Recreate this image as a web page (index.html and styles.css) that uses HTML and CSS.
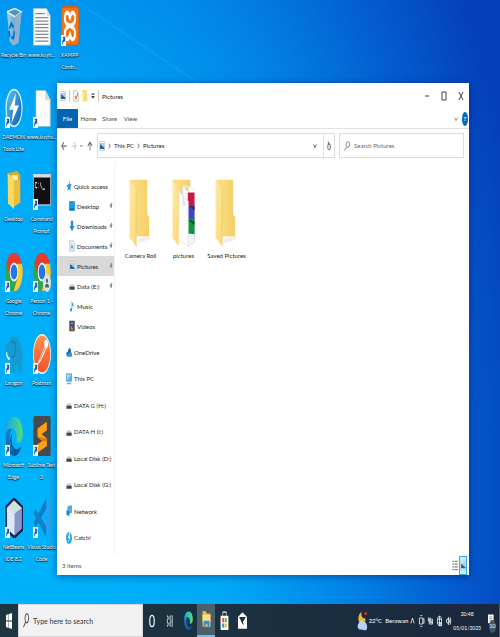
FILE: index.html
```html
<!DOCTYPE html>
<html lang="en">
<head>
<meta charset="utf-8">
<title>Pictures</title>
<link rel="stylesheet" href="styles.css">
</head>
<body>
<svg class="sprite" aria-hidden="true">
  <defs>
    <linearGradient id="gBin" x1="0" x2="1"><stop offset="0" stop-color="#a9cfe8"/><stop offset=".55" stop-color="#6ba9d0"/><stop offset="1" stop-color="#8fb6cf"/></linearGradient>
    <linearGradient id="gOrange" x1="0" x2="0" y1="0" y2="1"><stop offset="0" stop-color="#ff9350"/><stop offset="1" stop-color="#f3502a"/></linearGradient>
    <linearGradient id="gFolder" x1="0" x2="1"><stop offset="0" stop-color="#fbe08a"/><stop offset="1" stop-color="#f4cf66"/></linearGradient>
    <linearGradient id="gFlap" x1="0" x2="1" y1="0" y2="1"><stop offset="0" stop-color="#ffeaa6"/><stop offset="1" stop-color="#fbd977"/></linearGradient>
    <linearGradient id="gEdge1" x1="0" x2="1"><stop offset="0" stop-color="#1fa5e0"/><stop offset=".6" stop-color="#33c7b5"/><stop offset="1" stop-color="#63dc55"/></linearGradient>
    <linearGradient id="gEdge2" x1="0" x2="1" y1="0" y2="1"><stop offset="0" stop-color="#1b86d6"/><stop offset="1" stop-color="#0c4a94"/></linearGradient>
    <linearGradient id="gDaemon" x1="0" x2="1" y1="0" y2="1"><stop offset="0" stop-color="#5ac3f5"/><stop offset="1" stop-color="#0a5fb8"/></linearGradient>
    <linearGradient id="gCube" x1="0" x2="0" y1="0" y2="1"><stop offset="0" stop-color="#f4f9fc"/><stop offset="1" stop-color="#8fa6d8"/></linearGradient>
  </defs>
  <symbol id="shortcut" viewBox="0 0 12 12" preserveAspectRatio="none"><path d="M0 0h12v12H0z" fill="#f4f7fa"/><path d="M4 2h6v6L8 6.500Q4.500 7.500 4 11Q1 7 6 4z" fill="#1c56a8"/></symbol>
  <symbol id="bin" viewBox="0 0 48 48" preserveAspectRatio="none"><path d="M5 7 26 3l18 4-8 37-14 4-9-5z" fill="url(#gBin)"/><path d="M5 7 26 3l18 4-17 6z" fill="#4f93be" stroke="#dcecf5" stroke-width="2"/><path d="m27 13-4 34 13-3 8-37z" fill="#8cb3cc"/><path d="m12 27 5-6 6 5m2 4-2 8h-6m-4-1-2-7" fill="none" stroke="#0870c8" stroke-width="4"/></symbol>
  <symbol id="textfile" viewBox="0 0 48 48" preserveAspectRatio="none"><path d="M1 3h35l10 9v35H1z" fill="#fafafa" stroke="#b5bcc0"/><path d="M6 9h26M6 14h35M6 18h35M6 22h35M6 26h35M6 30h35M6 34h35M6 38h35M6 42h35" stroke="#848a8e" stroke-width="1.500"/><path d="M36 3v9h10" fill="#dce2e5"/></symbol>
  <symbol id="blankfile" viewBox="0 0 48 48" preserveAspectRatio="none"><path d="M8 3h25l13 11v32H8z" fill="#fbfbfb" stroke="#c0c6ca"/><path d="M33 3v11h13z" fill="#cfd5d8"/></symbol>
  <symbol id="xampp" viewBox="0 0 48 48" preserveAspectRatio="none"><rect x="1" y="1" width="46" height="46" rx="6" fill="#f17416" stroke="#d95f0a" stroke-width="2"/><path d="M17 8c-9 0-9 13 0 14l7 2 7-2c9-1 9-14 0-14-4 0-5 3-7 6-2-3-3-6-7-6zm0 32c-9 0-9-13 0-14l7-3 7 3c9 1 9 14 0 14-4 0-5-3-7-6-2 3-3 6-7 6z" fill="none" stroke="#fff" stroke-width="5"/></symbol>
  <symbol id="daemon" viewBox="0 0 48 48" preserveAspectRatio="none"><ellipse cx="24" cy="24" rx="23" ry="23" fill="#e4f3fb"/><ellipse cx="24" cy="24" rx="20" ry="21" fill="url(#gDaemon)"/><path d="M29 6 11 26h11l-5 17 20-22H26z" fill="#fff"/></symbol>
  <symbol id="folderopen" viewBox="0 0 48 48" preserveAspectRatio="none"><path d="M7 4 33 1l8 5v33l-22 6z" fill="#d9a92e"/><path d="M18 6h16v34l-14 5z" fill="#fff0aa"/><path d="M23 12h17v27l-17 5z" fill="#edbd3d"/><path d="m7 4 17 7v36L8 40z" fill="#f8d865"/></symbol>
  <symbol id="cmd" viewBox="0 0 48 48" preserveAspectRatio="none"><path d="M1 6h46v36H1z" fill="#111" stroke="#b6bcc0" stroke-width="2"/><path d="M1 5h46v4H1z" fill="#d8dcde"/><path d="M11 15H7v6h4m4-5v1m0 3v1m4-6 4 7m2 1h7" fill="none" stroke="#eee" stroke-width="1.500"/></symbol>
  <symbol id="chrome" viewBox="0 0 48 48" preserveAspectRatio="none"><circle cx="24" cy="24" r="23" fill="#31a652"/><path d="M4 12.500a23 23 0 0 1 40 0L45 14H24L14 30z" fill="#e33b2e"/><path d="M45 14A23 23 0 0 1 23 47l11-17-3-16z" fill="#fcc934"/><circle cx="24" cy="24" r="11.500" fill="#fff"/><circle cx="24" cy="24" r="9" fill="#2475e8"/></symbol>
  <symbol id="person" viewBox="0 0 24 24" preserveAspectRatio="none"><circle cx="12" cy="12" r="12" fill="#dfe3e7"/><circle cx="12" cy="9" r="3" fill="#56606a"/><path d="M6 18q0-5 6-5t6 5z" fill="#56606a"/></symbol>
  <symbol id="laragon" viewBox="0 0 48 48" preserveAspectRatio="none"><path d="M12 8Q22-2 34 6q13 8 13 24l-2 16H34l-2-10-4 1v9H17V35Q4 34 5 18q-5 3-4 10-4-8 2-16z" fill="#159bd1"/><path d="M17 10q13-3 12 9-3 11-12 8" fill="none" stroke="#0b7fb4" stroke-width="2"/><path d="M4 22q2 8 9 8" fill="none" stroke="#e7f6fb" stroke-width="3"/></symbol>
  <symbol id="postman" viewBox="0 0 48 48" preserveAspectRatio="none"><circle cx="24" cy="24" r="23" fill="url(#gOrange)" stroke="#f6ece5" stroke-width="2"/><path d="m11 38 6-8 15-16 4 3-15 15z" fill="#fff"/><circle cx="35" cy="12" r="5" fill="#fff"/><path d="m18 31 15-15" stroke="#f26b3a" stroke-width="1.500"/></symbol>
  <symbol id="edge" viewBox="0 0 48 48" preserveAspectRatio="none"><path d="M1 24C1 9 12 1 25 1c14 0 22 9 22 20 0 10-11 14-17 9 5-7-2-15-12-15C9 15 4 19 1 24z" fill="url(#gEdge1)"/><path d="M1 24c3-8 11-11 18-8-9 4-9 20 2 25 8 4 17 1 22-4-4 8-11 11-18 11C12 48 1 38 1 24z" fill="url(#gEdge2)"/><path d="M19 22c-4 8 1 17 11 18 6 0 11-2 14-4-8 12-27 8-30-4-1-5 1-9 5-10z" fill="#0a559c"/></symbol>
  <symbol id="sublime" viewBox="0 0 48 48" preserveAspectRatio="none"><rect x="1" y="0" width="46" height="48" rx="3" fill="#484a4b"/><path d="m12 15 25-8v10l-14 5 14 5v9l-25 8V34l13-4-13-5z" fill="#ff9f15"/><path d="m12 25 25 2v4l-12-1z" fill="#df7b08"/></symbol>
  <symbol id="netbeans" viewBox="0 0 48 48" preserveAspectRatio="none"><path d="M24 1 46 11v27L25 47 3 38V11z" fill="url(#gCube)" stroke="#182450" stroke-width="4"/><path d="m5 12 20 7 20-7L24 3z" fill="#cfe3df"/><path d="M25 19v26l19-8V12z" fill="#8796c6"/><path d="M6 13v24l19 8V19z" fill="#dde7f5"/></symbol>
  <symbol id="vscode" viewBox="0 0 48 48" preserveAspectRatio="none"><path d="m35 1 12 6v34l-12 6z" fill="#2ba2ed"/><path d="M35 1v12L7 35l-6-5z" fill="#087bc6"/><path d="M35 47V34L7 13l-6 5z" fill="#1281c9"/></symbol>
  <symbol id="folder" viewBox="0 0 48 96" preserveAspectRatio="none"><path d="m20 84 26-3-3 4-24 6z" fill="#eee"/><path d="M1 1h37v49l4 4v27H16z" fill="url(#gFolder)"/><path d="m1 1 14 15v79L1 83z" fill="url(#gFlap)"/><path d="M15 16v79" stroke="#e8c463"/></symbol>
  <symbol id="folderfull" viewBox="0 0 48 96" preserveAspectRatio="none"><path d="M1 1h37v79H16z" fill="url(#gFolder)"/><path d="m22 9 25 7v73l-12 6-14-9z" fill="#f3f5f6" stroke="#ccd1d3"/><path d="m25 8 10 8v14l13 3V15z" fill="#fff" stroke="#ddd"/><path d="m26 12 8 6v-6z" fill="#f8ce31"/><path d="M33 19h14v20l-14-2z" fill="#c91746"/><path d="M33 37h14v20l-14-1z" fill="#4146bf"/><path d="m33 37 14 7v-5z" fill="#312a72"/><path d="M33 56h14v22l-14-1z" fill="#139344"/><path d="m33 57 14 8v-5z" fill="#075424"/><path d="m14 15 12 13 8 3v64L14 86z" fill="#fcfcfc" stroke="#d6dadd"/><path d="m20 18 2 19 7 1-3-10z" fill="#e5e7e8"/><path d="m1 1 13 15v79L1 83z" fill="url(#gFlap)"/></symbol>
  <symbol id="smallfolder" viewBox="0 0 16 16" preserveAspectRatio="none"><path d="M1 0h12v9l2 1v5H1z" fill="#f9dc7b"/><path d="m1 0 4 3v13l-4-1z" fill="#ffe999"/></symbol>
  <symbol id="picture" viewBox="0 0 16 16" preserveAspectRatio="none"><path d="M1 2h14v12H1z" fill="#eef3f6" stroke="#a9b4bb"/><path d="M3 4h11v8H3z" fill="#9cd3f5"/><path d="m3 6 4 1 3 2 4 1v2H3z" fill="#245e8f"/></symbol>
  <symbol id="check" viewBox="0 0 16 16" preserveAspectRatio="none"><path d="M2 1h9l3 3v11H2z" fill="#fff" stroke="#999"/><path d="m5 8 3 4 5-8" fill="none" stroke="#e45c2d" stroke-width="2"/></symbol>
  <symbol id="star" viewBox="0 0 16 16" preserveAspectRatio="none"><path d="m9 1 1 4 5 1-3 3 1 6-4-3-5 3 1-5-4-3 6-1z" fill="#2497df"/></symbol>
  <symbol id="desktop" viewBox="0 0 16 16" preserveAspectRatio="none"><path d="M1 2h14v12H1z" fill="#1c9cec" stroke="#0878c8"/><path d="M2 11h12v2H2z" fill="#0b6ec0"/></symbol>
  <symbol id="download" viewBox="0 0 16 16" preserveAspectRatio="none"><path d="M5 1h6v7h4l-7 7-7-7h4z" fill="#2889db"/></symbol>
  <symbol id="document" viewBox="0 0 16 16" preserveAspectRatio="none"><path d="M2 1h9l3 3v11H2z" fill="#f4f9fc" stroke="#94a6b2"/><path d="M4 5h6M4 12h8" stroke="#7db2d0"/><path d="M5 7h6v4H5z" fill="#62afe0"/></symbol>
  <symbol id="drive" viewBox="0 0 16 16" preserveAspectRatio="none"><path d="m3 6 10 0 2 4H1z" fill="#c5c9cb"/><path d="M1 9h14v4H1z" fill="#3b4245"/><path d="M3 11h3" stroke="#5acc60"/></symbol>
  <symbol id="music" viewBox="0 0 16 16" preserveAspectRatio="none"><path d="M7 0c0 4 6 3 5 9l-2 3c1-4-1-5-2-5v6c-1 4-6 3-5 0 0-2 2-3 4-2z" fill="#1c9de8"/></symbol>
  <symbol id="video" viewBox="0 0 16 16" preserveAspectRatio="none"><path d="M1 1h14v14H1z" fill="#31363d"/><path d="M4 2h8v5H4z" fill="#507cb5"/><path d="M4 8h8v6H4z" fill="#b8814e"/><path d="m4 5 8 5v3z" fill="#233b71"/></symbol>
  <symbol id="cloud" viewBox="0 0 16 16" preserveAspectRatio="none"><path d="M1 11q0-4 4-3 1-6 6-5 3 1 2 5 4 2 2 6H3z" fill="#1265bb"/><path d="M4 13q0-4 4-4 4-1 5 2 3 0 2 3H5z" fill="#279de8"/></symbol>
  <symbol id="pc" viewBox="0 0 16 16" preserveAspectRatio="none"><path d="M1 1h14v10H1z" fill="#53b8ee" stroke="#4081ad"/><path d="M2 2h12L2 10z" fill="#9edaf8"/><path d="M2 14h12" stroke="#8ba2af" stroke-width="2"/></symbol>
  <symbol id="network" viewBox="0 0 16 16" preserveAspectRatio="none"><path d="m5 2 10-1v9l-10 2z" fill="#4eb6e8" stroke="#347eaa"/><path d="m1 7 8 1v7l-8-2z" fill="#238bc9"/></symbol>
  <symbol id="catch" viewBox="0 0 16 16" preserveAspectRatio="none"><circle cx="8" cy="8" r="8" fill="#1eaddd"/><path d="M9 0 5 8h3l-2 7 6-9H9l2-5z" fill="#fff"/></symbol>
  <symbol id="pin" viewBox="0 0 8 16" preserveAspectRatio="none"><path d="m4 2 3 4-1 1v3l-1 1-2-2-2 5 1-6-1-2h2z" fill="#879198"/></symbol>
  <symbol id="lens" viewBox="0 0 12 20" preserveAspectRatio="none"><ellipse cx="7.500" cy="7" rx="3.500" ry="6" fill="none" stroke="currentColor" stroke-width="1.500"/><path d="m5 12-4 7" stroke="currentColor" stroke-width="1.500"/></symbol>
  <symbol id="back" viewBox="0 0 16 16" preserveAspectRatio="none"><path d="M15 8H2m6-6L2 8l6 6" fill="none" stroke="currentColor" stroke-width="2"/></symbol>
  <symbol id="forward" viewBox="0 0 16 16" preserveAspectRatio="none"><path d="M1 8h13M8 2l6 6-6 6" fill="none" stroke="currentColor" stroke-width="2"/></symbol>
  <symbol id="up" viewBox="0 0 16 16" preserveAspectRatio="none"><path d="M8 15V2M2 8l6-6 6 6" fill="none" stroke="currentColor" stroke-width="2"/></symbol>
  <symbol id="down" viewBox="0 0 16 16" preserveAspectRatio="none"><path d="m2 4 6 8 6-8" fill="none" stroke="currentColor" stroke-width="3"/></symbol>
  <symbol id="right" viewBox="0 0 16 16" preserveAspectRatio="none"><path d="m4 2 8 6-8 6" fill="none" stroke="currentColor" stroke-width="3"/></symbol>
  <symbol id="custom" viewBox="0 0 16 16" preserveAspectRatio="none"><path d="M2 3h12" stroke="#333" stroke-width="3"/><path d="M1 8h14l-7 7z" fill="#333"/></symbol>
</svg>

<main class="desktop">
  <svg class="beam" viewBox="0 0 100 100" preserveAspectRatio="none" aria-hidden="true"><path d="M0 0 100 100" stroke="#39b4ff" stroke-opacity=".35" stroke-width="1"/></svg>
  <nav class="shortcuts" aria-label="Desktop">
    <a href="#" class="app"><span class="art"><svg><use href="#bin"/></svg></span><span>Recycle Bin</span></a>
    <a href="#" class="app"><span class="art"><svg><use href="#daemon"/></svg><svg class="arrow"><use href="#shortcut"/></svg></span><span>DAEMON<br>Tools Lite</span></a>
    <a href="#" class="app"><span class="art"><svg><use href="#folderopen"/></svg></span><span>Desktop</span></a>
    <a href="#" class="app"><span class="art"><svg><use href="#chrome"/></svg><svg class="arrow"><use href="#shortcut"/></svg></span><span>Google<br>Chrome</span></a>
    <a href="#" class="app"><span class="art"><svg><use href="#laragon"/></svg><svg class="arrow"><use href="#shortcut"/></svg></span><span>Laragon</span></a>
    <a href="#" class="app"><span class="art"><svg><use href="#edge"/></svg><svg class="arrow"><use href="#shortcut"/></svg></span><span>Microsoft<br>Edge</span></a>
    <a href="#" class="app"><span class="art"><svg><use href="#netbeans"/></svg><svg class="arrow"><use href="#shortcut"/></svg></span><span>NetBeans<br>IDE 8.2</span></a>
    <a href="#" class="app"><span class="art"><svg><use href="#textfile"/></svg></span><span>www.kuyh...</span></a>
    <a href="#" class="app"><span class="art"><svg><use href="#blankfile"/></svg><svg class="arrow"><use href="#shortcut"/></svg></span><span>www.kuyha...</span></a>
    <a href="#" class="app"><span class="art"><svg><use href="#cmd"/></svg><svg class="arrow"><use href="#shortcut"/></svg></span><span>Command<br>Prompt</span></a>
    <a href="#" class="app"><span class="art"><svg><use href="#chrome"/></svg><svg class="arrow"><use href="#shortcut"/></svg><svg class="profile"><use href="#person"/></svg></span><span>Person 1 -<br>Chrome</span></a>
    <a href="#" class="app"><span class="art"><svg><use href="#postman"/></svg><svg class="arrow"><use href="#shortcut"/></svg></span><span>Postman</span></a>
    <a href="#" class="app"><span class="art"><svg><use href="#sublime"/></svg><svg class="arrow"><use href="#shortcut"/></svg></span><span>Sublime Text<br>3</span></a>
    <a href="#" class="app"><span class="art"><svg><use href="#vscode"/></svg><svg class="arrow"><use href="#shortcut"/></svg></span><span>Visual Studio<br>Code</span></a>
    <a href="#" class="app"><span class="art"><svg><use href="#xampp"/></svg><svg class="arrow"><use href="#shortcut"/></svg></span><span>XAMPP<br>Contr...</span></a>
  </nav>

  <section class="window">
    <header class="titlebar">
      <svg class="mini"><use href="#picture"/></svg>
      <span class="rule"></span>
      <button class="quick" aria-label="Properties"><svg class="mini"><use href="#check"/></svg></button>
      <button class="quick" aria-label="New folder"><svg class="mini"><use href="#smallfolder"/></svg></button>
      <button class="quick" aria-label="Customize"><svg class="tiny"><use href="#custom"/></svg></button>
      <span class="rule"></span>
      <h1>Pictures</h1>
      <div class="controls">
        <button aria-label="Minimize"><svg viewBox="0 0 6 10" preserveAspectRatio="none"><path d="M1 5h4"/></svg></button>
        <button aria-label="Maximize"><svg viewBox="0 0 6 10" preserveAspectRatio="none"><path d="M1 1h4v8H1z"/></svg></button>
        <button aria-label="Close"><svg viewBox="0 0 6 10" preserveAspectRatio="none"><path d="m1 1 4 8m0-8L1 9"/></svg></button>
      </div>
    </header>
    <div class="tabs">
      <button class="file">File</button>
      <button>Home</button>
      <button>Share</button>
      <button>View</button>
      <div class="help">
        <button aria-label="Expand ribbon"><svg class="tiny"><use href="#down"/></svg></button>
        <button class="question">?</button>
      </div>
    </div>
    <div class="toolbar">
      <div class="history">
        <button aria-label="Back"><svg><use href="#back"/></svg></button>
        <button aria-label="Forward" class="off"><svg><use href="#forward"/></svg></button>
        <button aria-label="Recent"><svg class="dot"><use href="#down"/></svg></button>
        <button aria-label="Up"><svg><use href="#up"/></svg></button>
      </div>
      <div class="address">
        <svg class="mini"><use href="#picture"/></svg>
        <svg class="crumb"><use href="#right"/></svg>
        <a href="#">This PC</a>
        <svg class="crumb"><use href="#right"/></svg>
        <a href="#">Pictures</a>
        <button class="drop" aria-label="Previous locations"><svg class="tiny"><use href="#down"/></svg></button>
        <button class="reload" aria-label="Refresh"><svg viewBox="0 0 12 20" preserveAspectRatio="none"><path d="M3 7q-2 10 3 11t4-9Q9 4 4 5m0-4v6h4"/></svg></button>
      </div>
      <label class="find"><svg><use href="#lens"/></svg><input type="search" placeholder="Search Pictures" aria-label="Search Pictures"></label>
    </div>
    <div class="content">
      <nav class="tree" aria-label="Folders">
        <div class="favorites">
          <a href="#"><svg><use href="#star"/></svg>Quick access</a>
          <a href="#" class="sub"><svg><use href="#desktop"/></svg>Desktop<svg class="pin"><use href="#pin"/></svg></a>
          <a href="#" class="sub"><svg><use href="#download"/></svg>Downloads<svg class="pin"><use href="#pin"/></svg></a>
          <a href="#" class="sub"><svg><use href="#document"/></svg>Documents<svg class="pin"><use href="#pin"/></svg></a>
          <a href="#" class="sub current"><svg><use href="#picture"/></svg>Pictures<svg class="pin"><use href="#pin"/></svg></a>
          <a href="#" class="sub"><svg><use href="#drive"/></svg>Data (E:)<svg class="pin"><use href="#pin"/></svg></a>
          <a href="#" class="sub"><svg><use href="#music"/></svg>Music</a>
          <a href="#" class="sub"><svg><use href="#video"/></svg>Videos</a>
        </div>
        <div class="places">
          <a href="#"><svg><use href="#cloud"/></svg>OneDrive</a>
          <a href="#"><svg><use href="#pc"/></svg>This PC</a>
          <a href="#"><svg><use href="#drive"/></svg>DATA G (H:)</a>
          <a href="#"><svg><use href="#drive"/></svg>DATA H (I:)</a>
          <a href="#"><svg><use href="#drive"/></svg>Local Disk (D:)</a>
          <a href="#"><svg><use href="#drive"/></svg>Local Disk (G:)</a>
          <a href="#"><svg><use href="#network"/></svg>Network</a>
          <a href="#"><svg><use href="#catch"/></svg>Catch!</a>
        </div>
      </nav>
      <div class="files">
        <a href="#"><svg><use href="#folder"/></svg>Camera Roll</a>
        <a href="#"><svg><use href="#folderfull"/></svg>pictures</a>
        <a href="#"><svg><use href="#folder"/></svg>Saved Pictures</a>
      </div>
    </div>
    <footer class="status">
      <span>3 items</span>
      <div class="views">
        <button aria-label="Details"><svg viewBox="0 0 16 16" preserveAspectRatio="none"><path d="M1 2h4M7 2h8M1 6h4M7 6h8M1 10h4M7 10h8M1 14h4M7 14h8" stroke="#777" stroke-width="1.500"/></svg></button>
        <button class="on" aria-label="Large icons"><svg><use href="#picture"/></svg></button>
      </div>
    </footer>
  </section>
</main>

<footer class="taskbar">
  <button class="start" aria-label="Start"><svg viewBox="0 0 16 16" preserveAspectRatio="none"><path d="m0 2 7-1v6.500H0zm8-1 8-1v7.500H8zM0 8.500h7V15l-7-1zm8 0h8V16l-8-1z" fill="#fff"/></svg></button>
  <label class="search"><svg><use href="#lens"/></svg><input type="search" placeholder="Type here to search" aria-label="Type here to search"></label>
  <div class="pinned">
    <button aria-label="Cortana"><svg class="slim" viewBox="0 0 16 32" preserveAspectRatio="none"><ellipse cx="8" cy="16" rx="6" ry="13" fill="none" stroke="#fff" stroke-width="3"/></svg></button>
    <button aria-label="Task view"><svg class="slim" viewBox="0 0 16 32" preserveAspectRatio="none"><path d="M1 3v4h9V3M1 29v-4h9v4M1 11h9v10H1zM14 3v6m0 3v17m-1-19h3" fill="none" stroke="#dce3e6" stroke-width="2"/></svg></button>
    <button aria-label="Edge"><svg><use href="#edge"/></svg></button>
    <button class="active" aria-label="Explorer"><svg viewBox="0 0 16 16" preserveAspectRatio="none"><path d="M1 1h6l1 2h7v11H1z" fill="#f5be43"/><path d="M1 4h14v6H1z" fill="#ffdf84"/><path d="M3 9h10v6h-3v-3H6v3H3z" fill="#2c91dc"/></svg></button>
    <button aria-label="Store"><svg viewBox="0 0 16 16" preserveAspectRatio="none"><path d="M5 4V1h6v3" fill="none" stroke="#fff"/><path d="M1 4h14v12H1z" fill="#fff"/><path d="M4 6h3.500v3.500H4z" fill="#e74a2c"/><path d="M8.500 6H12v3.500H8.500z" fill="#72b52b"/><path d="M4 10.500h3.500V14H4z" fill="#2298df"/><path d="M8.500 10.500H12V14H8.500z" fill="#f6b51c"/></svg></button>
    <button aria-label="Mail"><svg viewBox="0 0 16 16" preserveAspectRatio="none"><path d="m0 5 8-4 8 4v10H0z" fill="#fff"/><path d="M2 5h12l-5 4 1 3-3-2z" fill="#1d333f"/></svg></button>
  </div>
  <div class="tray">
    <button class="weather"><svg viewBox="0 0 16 24" preserveAspectRatio="none"><path d="M7 1q-7 5-4 12l9 1q3-3 1-5-7 0-6-8z" fill="#f5b52f"/><circle cx="14" cy="3" r="2" fill="#e52c2c"/><path d="M3 22Q-1 18 3 14q3-5 7-1 5 0 6 5t-3 5z" fill="#b8d3f2"/></svg>22°C&nbsp; Berawan</button>
    <div class="signals">
      <button aria-label="Hidden icons"><svg viewBox="0 0 12 20" preserveAspectRatio="none"><path d="m2 14 4-9 4 9"/></svg></button>
      <button aria-label="Meet now"><svg viewBox="0 0 12 20" preserveAspectRatio="none"><path d="M1 5h8v10H1zM9 8l3-2v8l-3-2M3 1h5M3 19h5"/></svg></button>
      <button aria-label="Battery"><svg viewBox="0 0 12 20" preserveAspectRatio="none"><path d="M3 7h8v8H3zM1 4v6h4V4M6 10h3v3H6z"/></svg></button>
      <button aria-label="Network"><svg viewBox="0 0 12 20" preserveAspectRatio="none"><ellipse cx="6" cy="10" rx="5" ry="8"/><path d="M1 7h10M1 13h10M6 2v16M7 14h4v4H7z"/></svg></button>
      <button aria-label="Volume"><svg viewBox="0 0 12 20" preserveAspectRatio="none"><path d="M1 8h2l3-4v12l-3-4H1zM8 7q2 3 0 6m2-9q3 6 0 12"/></svg></button>
    </div>
    <button class="clock">20:48<br>05/01/2023</button>
    <button class="notice" aria-label="Notifications"><svg viewBox="0 0 16 24" preserveAspectRatio="none"><path d="M0 1h15v15H9l-4 5v-5H0z" fill="#fff"/><path d="M3 5h9M3 8h9M3 11h9" stroke="#26374a"/></svg><span>10</span></button>
  </div>
</footer>
</body>
</html>
```
FILE: styles.css
```css
* { box-sizing: border-box; }

body {
  margin: 0;
  height: 100vh;
  display: flex;
  flex-direction: column;
  overflow: hidden;
  font-family: Lato, Roboto, "Liberation Sans", sans-serif;
  font-size: 6px;
  color: #222;
}

a { color: inherit; text-decoration: none; }

button {
  display: flex;
  align-items: center;
  justify-content: center;
  padding: 0;
  border: 0;
  background: none;
  color: inherit;
  font: inherit;
}

input {
  min-width: 0;
  flex: 1;
  padding: 0;
  border: 0;
  outline: 0;
  background: none;
  font: inherit;
  color: inherit;
}

input::placeholder { color: inherit; opacity: 1; }

svg { flex: none; overflow: visible; }

.sprite { position: absolute; width: 0; height: 0; }

.desktop {
  position: relative;
  flex: 1;
  min-height: 0;
  background: radial-gradient(ellipse 106% 165% at 6% 82%, #00b4fb 0, #00a9f8 38%, #0285e8 60%, #0459ce 82%, #0440ba 96%);
}

.beam { position: absolute; left: 15%; top: 0; width: 25%; height: 14%; }

.shortcuts {
  position: relative;
  height: 100%;
  display: grid;
  grid-auto-flow: column;
  grid-template-rows: repeat(7, 82px);
  grid-auto-columns: 27px;
  column-gap: 1px;
}

.app {
  display: flex;
  flex-direction: column;
  align-items: center;
  gap: 3px;
  padding-top: 6px;
  font-size: 5px;
  line-height: 12px;
  text-align: center;
  white-space: nowrap;
  color: #fff;
  text-shadow: 0 1px 1px #000, 0 0 2px #003a60;
}

.art { position: relative; width: 18px; height: 40px; }
.art svg { display: block; width: 18px; height: 40px; }
.art .arrow { position: absolute; left: 0; bottom: 0; width: 5px; height: 11px; }
.art .profile { position: absolute; right: 0; bottom: 0; width: 8px; height: 18px; }

.window {
  position: absolute;
  inset: 83px 31px 29px 57px;
  display: flex;
  flex-direction: column;
  background: #fff;
  box-shadow: 0 1px 8px rgba(0, 20, 80, .5);
}

.titlebar {
  display: flex;
  align-items: center;
  gap: 3px;
  height: 26px;
  padding-left: 3px;
}

.titlebar h1 { margin: 0; font-size: 6px; font-weight: 400; color: #222; }
.mini { width: 6px; height: 12px; }
.tiny { width: 4px; height: 6px; }
.rule { width: 1px; height: 12px; background: #ccc; }

.controls { display: flex; margin-left: auto; }
.controls button { width: 17px; height: 26px; }
.controls svg { width: 6px; height: 10px; fill: none; stroke: #444; }

.tabs {
  display: flex;
  height: 20px;
  border-bottom: 1px solid #e2e2e2;
  color: #444;
}

.tabs > button { width: 21px; }
.tabs > .file { background: #0464b4; color: #fff; }

.help { display: flex; align-items: center; gap: 4px; margin-left: auto; padding-right: 1px; color: #888; }
.question { width: 6px; height: 14px; border-radius: 50%; background: #0669b8; color: #fff; font-weight: 700; }

.toolbar {
  display: flex;
  gap: 4px;
  height: 33px;
  padding: 4px 5px 4px 4px;
}

.history { display: flex; align-items: center; justify-content: space-between; width: 32px; color: #666; }
.history svg { display: block; width: 6px; height: 10px; }
.history .dot { width: 3px; height: 4px; }
.history .off { color: #ccc; }

.address, .find { display: flex; align-items: center; border: 1px solid #dcdcdc; }
.address { flex: 1; gap: 3px; padding-left: 1px; }
.crumb { width: 3px; height: 6px; color: #777; }
.drop { margin-left: auto; width: 10px; color: #555; }
.reload { align-self: stretch; width: 11px; border-left: 1px solid #e0e0e0; }
.reload svg { width: 4px; height: 10px; fill: none; stroke: #555; stroke-width: 2; }
.find { flex: 0 1 125px; gap: 4px; padding-left: 4px; color: #666; }
.find svg { width: 6px; height: 10px; }

.content { flex: 1; display: flex; min-height: 0; }

.tree {
  display: flex;
  flex-direction: column;
  gap: 6px;
  width: 58px;
  padding: 14px 0 7px;
  border-right: 1px solid #f3f3f3;
}

.tree a {
  display: flex;
  align-items: center;
  gap: 2px;
  height: 20px;
  padding-left: 9px;
  white-space: nowrap;
}

.tree svg { width: 6px; height: 12px; }
.tree .sub { padding-left: 12px; }
.tree .pin { width: 4px; height: 10px; margin-left: auto; margin-right: 1px; }
.tree .current { background: #d9d9d9; }

.places { flex: 1; display: flex; flex-direction: column; justify-content: space-between; }

.files { display: flex; align-items: flex-start; padding: 17px 0 0 4px; }

.files a {
  display: flex;
  flex-direction: column;
  align-items: center;
  gap: 4px;
  width: 43px;
  line-height: 10px;
  white-space: nowrap;
}

.files svg { width: 23px; height: 68px; }

.status { display: flex; align-items: center; height: 20px; padding: 0 2px 0 5px; color: #40506c; }
.views { display: flex; margin-left: auto; }
.views button { width: 8px; height: 19px; }
.views svg { width: 6px; height: 11px; }
.views .on { background: #c9eafa; border: 1px solid #3aaede; }

.taskbar {
  display: flex;
  height: 33px;
  color: #fff;
  background: linear-gradient(90deg, #1e3640, #1b2e40 65%, #1a283d);
}

.start { width: 18px; }
.start svg { width: 6px; height: 16px; }

.search {
  display: flex;
  align-items: center;
  gap: 4px;
  flex: 0 1 125px;
  padding-left: 4px;
  background: #f2f2f2;
  border: 1px solid #d2d6d8;
  color: #333;
  font-size: 7px;
}

.search svg { width: 6px; height: 15px; }

.pinned { display: flex; }
.pinned button { width: 18px; }
.pinned svg { width: 9px; height: 19px; }
.pinned .slim { width: 6px; height: 14px; }
.pinned .active { background: #4b6069; border-bottom: 2px solid #76b9ed; }

.tray { display: flex; align-items: center; gap: 2px; margin-left: auto; white-space: nowrap; }
.weather { gap: 2px; }
.weather svg { width: 10px; height: 20px; }
.signals { display: flex; gap: 4px; }
.signals svg { width: 5px; height: 12px; fill: none; stroke: #fff; stroke-width: 1.5; }
.clock { font-size: 5px; line-height: 14px; text-align: center; }

.notice { position: relative; width: 17px; height: 33px; border-right: 1px solid #52606e; }
.notice svg { width: 6px; height: 14px; }

.notice span {
  position: absolute;
  right: 3px;
  bottom: 4px;
  width: 7px;
  height: 13px;
  border-radius: 50%;
  background: #4a5560;
  font-size: 5px;
  line-height: 13px;
}
```
